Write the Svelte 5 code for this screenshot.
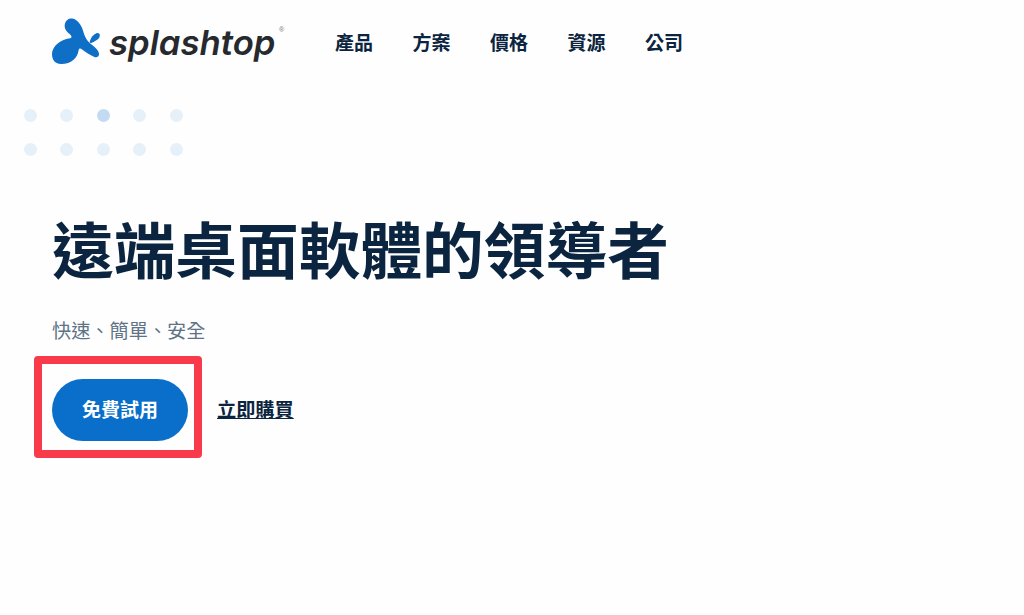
<script lang="ts">
	const navItems: string[] = ['產品', '方案', '價格', '資源', '公司'];
	const dots: number[] = [0, 1, 2, 3, 4, 5, 6, 7, 8, 9];
</script>

<div class="page">
	<header class="topbar">
		<a class="brand" href="#home">
			<svg class="mark" viewBox="6 5 47 42.5" width="48" height="46" preserveAspectRatio="none" aria-hidden="true">
				<path
					fill="#0f6fc6"
					d="M18.5 11C19.5 6.5 23 5 26 5.5C31 6.5 34.5 11 36.5 17C38 22 39.5 25 43 28C46.5 31 51 33.5 52 37.5C52.5 40.5 50 42 47.5 41C43 39 39 36.5 35.5 34C33.5 32.8 32.5 33 32 35C31 42 25 47.5 15 47.5C9 47.5 6 43.5 6 38.5C6 32 12 27 18 25C21 24 24 24 25 23C25.5 21 23 20 21 18C19 16 18 13.5 18.5 11Z"
				/>
				<path
					fill="#0f6fc6"
					d="M43 26.5C44 23 46.5 20 49.5 19C52 18.5 53.5 20 52.5 22.5C51.5 25 47 27 44.5 28C43.5 28.3 42.8 27.5 43 26.5Z"
				/>
			</svg>
			<span class="wordmark">splashtop</span>
			<span class="reg">®</span>
		</a>
		<nav class="nav">
			{#each navItems as item}
				<a href="#{item}">{item}</a>
			{/each}
		</nav>
	</header>

	<div class="dots" aria-hidden="true">
		{#each dots as d}
			<span class="dot" class:strong={d === 2}></span>
		{/each}
	</div>

	<main class="hero">
		<h1>遠端桌面軟體的領導者</h1>
		<p>快速、簡單、安全</p>
		<div class="actions">
			<div class="highlighted">
				<button type="button">免費試用</button>
				<span class="frame" aria-hidden="true"></span>
			</div>
			<a class="buy" href="#buy">立即購買</a>
		</div>
	</main>
</div>

<style>
	:global(body) {
		background: #fefefe;
	}

	.page {
		height: 615px;
		overflow: hidden;
		font-family: 'Noto Sans CJK TC', 'Liberation Sans', sans-serif;
		color: #0b2540;
	}

	.topbar {
		display: flex;
		align-items: center;
		height: 88px;
		padding-left: 52px;
	}

	.brand {
		position: relative;
		display: flex;
		align-items: center;
		width: 283px;
		height: 48px;
		margin-top: -7px;
		color: #26292e;
		text-decoration: none;
	}

	.wordmark {
		margin-left: 9px;
		padding-top: 4px;
		font-family: Inter, Lato, 'Liberation Sans', sans-serif;
		font-feature-settings: 'cv11' 1;
		font-size: 34.7px;
		font-style: italic;
		font-weight: 600;
		line-height: 1;
	}

	.reg {
		position: absolute;
		left: 227px;
		top: 9px;
		font-family: 'Liberation Sans', sans-serif;
		font-size: 7px;
		color: #777;
	}

	.nav {
		display: flex;
		gap: 39.5px;
		margin-top: -6px;
	}

	.nav a {
		font-size: 19px;
		font-weight: 700;
		line-height: 1;
		color: #0b2540;
		text-decoration: none;
	}

	.dots {
		display: grid;
		grid-template-columns: repeat(5, 13px);
		column-gap: 23.4px;
		row-gap: 21px;
		margin: 21px 0 0 24px;
	}

	.dot {
		width: 13px;
		height: 13px;
		border-radius: 50%;
		background: #e6f0f9;
	}

	.dot.strong {
		background: #c3dbf2;
	}

	.hero {
		padding: 43px 0 0 52px;
	}

	h1 {
		margin: 0;
		font-size: 61.7px;
		font-weight: 700;
		line-height: 96px;
		white-space: nowrap;
		color: #0b2540;
	}

	p {
		margin: 21px 0 0;
		font-size: 19.2px;
		line-height: 28px;
		color: #5f7386;
	}

	.actions {
		display: flex;
		align-items: center;
		gap: 29px;
		margin-top: 35px;
	}

	.highlighted {
		position: relative;
	}

	button {
		display: block;
		width: 136px;
		height: 62px;
		padding: 0 0 4px;
		border: 0;
		border-radius: 31px;
		background: #0a6fca;
		color: #fff;
		font-family: inherit;
		font-size: 19px;
		font-weight: 700;
	}

	.frame {
		position: absolute;
		inset: -23px -14px -17px -18px;
		border: 8px solid #f93a4b;
		border-radius: 4px;
	}

	.buy {
		margin-top: -2px;
		font-size: 19.2px;
		font-weight: 700;
		color: #0b2540;
		text-decoration: underline;
	}
</style>
